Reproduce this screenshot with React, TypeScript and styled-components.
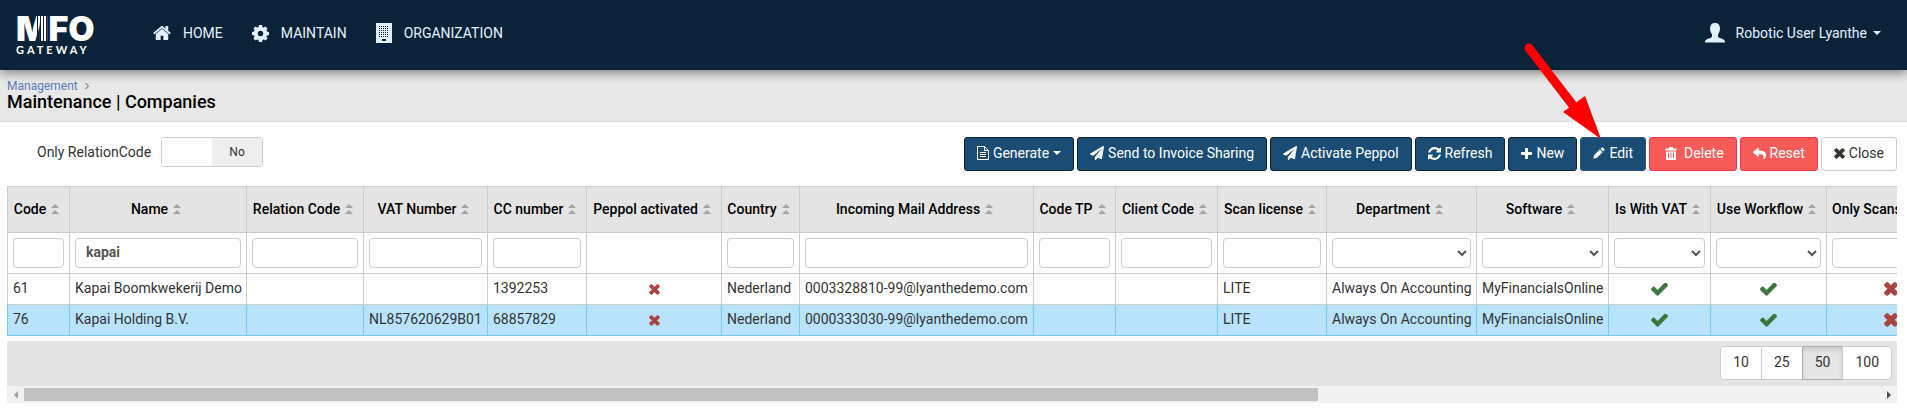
import React from 'react';
import styled, { createGlobalStyle, css } from 'styled-components';
import { FaPaperPlane, FaReply } from 'react-icons/fa';

const GlobalStyle = createGlobalStyle`
  *, *::before, *::after { box-sizing: border-box; }
  body {
    margin: 0;
    background: #fff;
    color: #333;
    font: 14px/20px Roboto, "Liberation Sans", sans-serif;
  }
  button, input, select { font: inherit; color: inherit; }
  a { color: inherit; text-decoration: none; }
`;

/* ---------- icons ---------- */

const Icon = styled.svg<{ $w?: number; $h?: number }>`
  display: block;
  flex: none;
  width: ${(p) => p.$w ?? 14}px;
  height: ${(p) => p.$h ?? p.$w ?? 14}px;
  fill: currentColor;
`;

const CHECK =
  'M1671 566q0 40-28 68l-724 724-136 136q-28 28-68 28t-68-28l-136-136-362-362q-28-28-28-68t28-68l136-136q28-28 68-28t68 28l294 295 656-657q28-28 68-28t68 28l136 136q28 28 28 68z';
const TIMES =
  'M1490 1322q0 40-28 68l-136 136q-28 28-68 28t-68-28l-294-294-294 294q-28 28-68 28t-68-28l-136-136q-28-28-28-68t28-68l294-294-294-294q-28-28-28-68t28-68l136-136q28-28 68-28t68 28l294 294 294-294q28-28 68-28t68 28l136 136q28 28 28 68t-28 68l-294 294 294 294q28 28 28 68z';
const REFRESH =
  'M1639 1056q0 5-1 7-64 268-268 434.5t-478 166.5q-146 0-282.5-55t-243.5-157l-129 129q-19 19-45 19t-45-19-19-45v-448q0-26 19-45t45-19h448q26 0 45 19t19 45-19 45l-137 137q71 66 161 102t187 36q134 0 250-65t186-179q11-17 53-117 8-23 30-23h192q13 0 22.5 9.5t9.5 22.5zm25-800v448q0 26-19 45t-45 19h-448q-26 0-45-19t-19-45 19-45l138-138q-148-137-349-137-134 0-250 65t-186 179q-11 17-53 117-8 23-30 23h-199q-13 0-22.5-9.5t-9.5-22.5v-7q65-268 270-434.5t480-166.5q146 0 284 55.5t245 156.5l130-129q19-19 45-19t45 19 19 45z';
const PLUS =
  'M1600 736v192q0 40-28 68t-68 28h-416v416q0 40-28 68t-68 28h-192q-40 0-68-28t-28-68v-416h-416q-40 0-68-28t-28-68v-192q0-40 28-68t68-28h416v-416q0-40 28-68t68-28h192q40 0 68 28t28 68v416h416q40 0 68 28t28 68z';
const HOME =
  'M1472 992v480q0 26-19 45t-45 19h-384v-384h-256v384h-384q-26 0-45-19t-19-45v-480q0-1 .5-3t.5-3l575-474 575 474q1 2 1 6zm223-69l-62 74q-8 9-21 11h-3q-13 0-21-7l-692-577-692 577q-12 8-24 7-13-2-21-11l-62-74q-8-10-7-23.5t11-21.5l719-599q32-26 76-26t76 26l244 204v-195q0-14 9-23t23-9h192q14 0 23 9t9 23v408l219 182q10 8 11 21.5t-7 23.5z';

const CheckIcon = () => (
  <Icon $w={17} $h={13} viewBox="100 370 1590 1180">
    <path d={CHECK} stroke="currentColor" strokeWidth="50" />
  </Icon>
);
const TimesIcon = ({ small }: { small?: boolean }) => (
  <Icon $w={small ? 11 : 14} viewBox="236 308 1320 1320">
    <path d={TIMES} stroke="currentColor" strokeWidth="110" />
  </Icon>
);
const RefreshIcon = () => <Icon $w={13} viewBox="128 128 1536 1536"><path d={REFRESH} /></Icon>;
const PlusIcon = () => <Icon $w={11} viewBox="192 128 1408 1408"><path d={PLUS} /></Icon>;
const HomeIcon = () => <Icon $w={18} viewBox="64 64 1664 1664"><path d={HOME} /></Icon>;

const CogIcon = () => (
  <Icon $w={17} viewBox="-10 -10 20 20">
    <circle r="5.500" fill="none" stroke="currentColor" strokeWidth="4.500" />
    {[0, 45, 90, 135, 180, 225, 270, 315].map((a) => (
      <path key={a} d="M-2.600-6.500L-1.800-10h3.600l.800 3.500z" transform={`rotate(${a})`} />
    ))}
  </Icon>
);
const FileIcon = () => (
  <Icon $w={12} $h={14} viewBox="0 0 12 14">
    <path fill="none" stroke="currentColor" d="M.5.5h7l4 4v9H.5zM7.5.5v4h4" />
    <path d="M3 6h6v1H3zM3 8h6v1H3zM3 10h6v1H3z" />
  </Icon>
);
const PencilIcon = () => (
  <Icon $w={12} viewBox="0 0 13 13">
    <path d="M9.4.7a1 1 0 0 1 1.4 0l1.5 1.5a1 1 0 0 1 0 1.4L11 4.900 8.100 2zM7.400 2.700l2.900 2.900-6 6L.300 12.700l1.100-4z" />
  </Icon>
);
const TrashIcon = () => (
  <Icon $w={12} $h={13} viewBox="0 0 12 13">
    <path fillRule="evenodd" d="M4 0h4v1.500h3.500V3.500H.500V1.500H4zM1 4.500h10V12a1 1 0 0 1-1 1H2a1 1 0 0 1-1-1zM3 5.500V11h1V5.500zM5.500 5.500V11h1V5.500zM8 5.500V11h1V5.500z" />
  </Icon>
);
const UserIcon = () => (
  <Icon $w={20} viewBox="0 0 20 20">
    <path d="M10 0c3.300 0 5 2 5 5.500 0 2.500-.800 4.500-2 5.800v2.200c0 .500.300.800.800 1l4.200 1.700c1.300.600 2 1.500 2 2.800v.500H0V19c0-1.300.700-2.200 2-2.800l4.200-1.700c.500-.200.800-.500.800-1v-2.200C5.800 10 5 8 5 5.500 5 2 6.700 0 10 0z" />
  </Icon>
);
const BuildingIcon = () => (
  <Icon $w={16} $h={20} viewBox="0 0 16 20">
    <path fillRule="evenodd" d="M0 0h16v20H0zM6 16v2h4v-2z" />
    <path stroke="#0b2338" strokeDasharray="1 1" d="M3 3.500h10M3 5.500h10M3 7.500h10M3 9.500h10M3 11.500h10M3 13.500h10" />
  </Icon>
);
const SortIcon = () => (
  <Icon $w={8} $h={10} viewBox="0 0 8 10">
    <path fill="#a3a3a3" d="M4 0l4 4H0zM4 6l4 4H0z" />
  </Icon>
);
const Caret = styled.span`
  border: 4px solid transparent;
  border-top-color: currentColor;
  border-bottom: 0;
`;

/* ---------- top bar ---------- */

const TopBar = styled.header`
  position: relative;
  display: flex;
  align-items: center;
  height: 70px;
  padding: 0 26px 4px 16px;
  background: #0b2338;
  color: #e4f1fc;
  box-shadow: 0 3px 10px rgba(0, 0, 0, 0.45);
`;
const Logo = styled.a`
  display: flex;
  flex-direction: column;
  width: 137px;
  padding-top: 4px;
  color: #fff;
`;
const LogoMark = styled.span`
  position: relative;
  font: 900 34px/28px Inter, sans-serif;
`;
/* Thin bars that take the place of the right stem of the M. */
const LogoBars = styled.span`
  position: absolute;
  left: 21px;
  top: 0;
  width: 10px;
  height: 28px;
  background: repeating-linear-gradient(90deg, #0b2338 0 1px, transparent 1px 3px);
`;
const LogoSub = styled.span`
  font: 700 11px/13px Lato, sans-serif;
  letter-spacing: 3px;
`;
const Nav = styled.nav`
  display: flex;
  gap: 29px;
  flex: 1;
`;
const NavLink = styled.a`
  display: flex;
  align-items: center;
  gap: 12px;
`;
const UserMenu = styled.button`
  display: flex;
  align-items: center;
  gap: 6px;
  padding: 0;
  border: 0;
  background: none;
  svg { margin-right: 5px; }
`;

/* ---------- page heading ---------- */

const PageHead = styled.section`
  height: 52px;
  padding: 8px 7px 0;
  background: #e8e8e8;
  border-bottom: 1px solid #ddd;
`;
const Crumbs = styled.nav`
  display: flex;
  align-items: center;
  gap: 7px;
  font-size: 12px;
  line-height: 16px;
  color: #5b7bb8;
  svg { fill: none; stroke: #555; }
`;
const Title = styled.h1`
  margin: 0;
  font-size: 18px;
  line-height: 16px;
  font-weight: 500;
  color: #000;
`;

/* ---------- toolbar ---------- */

const Toolbar = styled.div`
  display: flex;
  justify-content: space-between;
  align-items: flex-start;
  padding: 15px 10px 15px 37px;
`;
const Filter = styled.div`
  display: flex;
  align-items: center;
  gap: 10px;
  line-height: 28px;
`;
const Switch = styled.label`
  display: grid;
  grid-template-columns: 1fr 1fr;
  width: 102px;
  height: 30px;
  border: 1px solid #ccc;
  border-radius: 4px;
  overflow: hidden;
  text-align: center;
  font-size: 12px;
  input { appearance: none; margin: 0; background: #fff; }
  span { background: #eee; }
`;
const Actions = styled.div`
  display: flex;
  gap: 3px;
`;
type Tone = 'primary' | 'active' | 'danger' | 'plain';
const tones = {
  primary: css`background: #1b4d74; border-color: #0b2338; color: #fff;`,
  active: css`background: #1b4d74; border-color: #2b5580; color: #fff;`,
  danger: css`background: #f75b57; border-color: #f5344a; color: #fff;`,
  plain: css`background: #fff; border-color: #ccc; color: #333;`,
};
const Button = styled.button<{ $tone: Tone; $wide?: boolean }>`
  display: flex;
  align-items: center;
  gap: ${(p) => (p.$wide ? 7 : 4)}px;
  height: 34px;
  padding: ${(p) => (p.$wide ? '0 12px 2px 15px' : '0 12px 2px')};
  border: 1px solid;
  border-radius: 3px;
  white-space: nowrap;
  ${(p) => tones[p.$tone]}
`;

/* ---------- grid ---------- */

const GridArea = styled.main`
  margin: 0 10px 0 7px;
`;
const Clip = styled.div`
  overflow: hidden;
`;
const Table = styled.table`
  width: 1948px;
  table-layout: fixed;
  border-collapse: separate;
  border-spacing: 0;
`;
const Col = styled.col<{ $w: number }>`
  width: ${(p) => p.$w}px;
`;
const Th = styled.th`
  height: 47px;
  padding: 0 9px 2px 5px;
  border: solid #ccc;
  border-width: 1px 1px 1px 0;
  background: #e4e4e4;
  color: #000;
  font-weight: 500;
  &:first-child { border-left-width: 1px; }
`;
const Sort = styled.button<{ $start?: boolean }>`
  display: flex;
  align-items: center;
  justify-content: ${(p) => (p.$start ? 'flex-start' : 'center')};
  gap: 5px;
  width: 100%;
  padding: 0;
  border: 0;
  background: none;
  color: #000;
  white-space: nowrap;
`;
const Td = styled.td<{ $selected?: boolean }>`
  height: 31px;
  padding: 0 5px 2px;
  border: solid ${(p) => (p.$selected ? '#77c8f4' : '#ccc')};
  border-width: 0 1px 1px 0;
  background: ${(p) => (p.$selected ? '#b9e3fb' : '#fff')};
  white-space: nowrap;
  &:first-child { border-left-width: 1px; }
`;
const FilterTd = styled(Td)`
  height: 41px;
  padding: 0 5px;
`;
const field = css`
  display: block;
  width: 100%;
  height: 30px;
  border: 1px solid #ccc;
  border-radius: 4px;
  background: #fff;
  color: #555;
`;
const Field = styled.input`
  ${field}
  padding: 0 10px 2px;
  font-weight: 700;
`;
const Select = styled.select`
  ${field}
`;
const Mark = styled.span<{ $ok?: boolean }>`
  display: flex;
  justify-content: center;
  padding-top: 2px;
  color: ${(p) => (p.$ok ? '#3c763d' : '#a94442')};
`;
const Footer = styled.div`
  display: flex;
  justify-content: flex-end;
  margin-top: 5px;
  padding: 5px 5px 6px;
  background: #e4e4e4;
`;
const PageSize = styled.button<{ $on?: boolean }>`
  height: 34px;
  margin-left: -1px;
  padding: 0 12px 2px;
  border: 1px solid ${(p) => (p.$on ? '#adadad' : '#ccc')};
  background: ${(p) => (p.$on ? '#e6e6e6' : '#fff')};
  box-shadow: ${(p) => (p.$on ? 'inset 0 3px 5px rgba(0, 0, 0, 0.125)' : 'none')};
  &:first-child { border-radius: 4px 0 0 4px; }
  &:last-child { border-radius: 0 4px 4px 0; }
`;
const ScrollBar = styled.div`
  display: flex;
  align-items: center;
  height: 17px;
  background: #f1f1f1;
`;
const ScrollStep = styled.span<{ $right?: boolean }>`
  display: flex;
  flex: none;
  justify-content: center;
  width: 17px;
  color: ${(p) => (p.$right ? '#505050' : '#a3a3a3')};
`;
const Track = styled.div`
  display: grid;
  grid-template-columns: 23fr 10fr;
  flex: 1;
`;
const Thumb = styled.div`
  height: 13px;
  background: #c1c1c1;
`;
const StepArrow = ({ right }: { right?: boolean }) => (
  <ScrollStep $right={right}>
    <Icon $w={4} $h={8} viewBox="0 0 4 8">
      <path d={right ? 'M0 0l4 4-4 4z' : 'M4 0L0 4l4 4z'} />
    </Icon>
  </ScrollStep>
);

const Pointer = styled.svg`
  position: absolute;
  top: 40px;
  right: 302px;
  width: 84px;
  height: 100px;
  pointer-events: none;
`;

/* ---------- data ---------- */

type Column = { label: string; w: number; filter?: 'text' | 'select'; value?: string; start?: boolean };
const columns: Column[] = [
  { label: 'Code', w: 63, filter: 'text' },
  { label: 'Name', w: 177, filter: 'text', value: 'kapai' },
  { label: 'Relation Code', w: 117, filter: 'text' },
  { label: 'VAT Number', w: 124, filter: 'text' },
  { label: 'CC number', w: 99, filter: 'text' },
  { label: 'Peppol activated', w: 135 },
  { label: 'Country', w: 78, filter: 'text' },
  { label: 'Incoming Mail Address', w: 234, filter: 'text' },
  { label: 'Code TP', w: 82, filter: 'text' },
  { label: 'Client Code', w: 102, filter: 'text' },
  { label: 'Scan license', w: 109, filter: 'text' },
  { label: 'Department', w: 150, filter: 'select' },
  { label: 'Software', w: 132, filter: 'select' },
  { label: 'Is With VAT', w: 102, filter: 'select' },
  { label: 'Use Workflow', w: 116, filter: 'select' },
  { label: 'Only Scans', w: 128, filter: 'select', start: true },
];

const cross = <Mark><TimesIcon small /></Mark>;
const bigCross = <Mark><TimesIcon /></Mark>;
const check = <Mark $ok><CheckIcon /></Mark>;

const rows = [
  ['61', 'Kapai Boomkwekerij Demo', '', '', '1392253', cross, 'Nederland', '0003328810-99@lyanthedemo.com', '', '', 'LITE', 'Always On Accounting', 'MyFinancialsOnline', check, check, bigCross],
  ['76', 'Kapai Holding B.V.', '', 'NL857620629B01', '68857829', cross, 'Nederland', '0000333030-99@lyanthedemo.com', '', '', 'LITE', 'Always On Accounting', 'MyFinancialsOnline', check, check, bigCross],
];
const SELECTED = 1;

export default function App() {
  return (
    <>
      <GlobalStyle />
      <TopBar>
        <Logo href="#">
          <LogoMark>MFO<LogoBars /></LogoMark>
          <LogoSub>GATEWAY</LogoSub>
        </Logo>
        <Nav>
          <NavLink href="#"><HomeIcon />HOME</NavLink>
          <NavLink href="#"><CogIcon />MAINTAIN</NavLink>
          <NavLink href="#"><BuildingIcon />ORGANIZATION</NavLink>
        </Nav>
        <UserMenu><UserIcon />Robotic User Lyanthe<Caret /></UserMenu>
      </TopBar>

      <PageHead>
        <Crumbs>
          <a href="#">Management</a>
          <Icon $w={4} $h={8} viewBox="0 0 4 8"><path d="M.5 1l3 3-3 3" /></Icon>
        </Crumbs>
        <Title>Maintenance | Companies</Title>
      </PageHead>

      <Toolbar>
        <Filter>
          <label htmlFor="relation">Only RelationCode</label>
          <Switch>
            <input id="relation" type="checkbox" role="switch" />
            <span>No</span>
          </Switch>
        </Filter>
        <Actions>
          <Button $tone="primary"><FileIcon />Generate<Caret /></Button>
          <Button $tone="primary"><FaPaperPlane size={14} />Send to Invoice Sharing</Button>
          <Button $tone="primary"><FaPaperPlane size={14} />Activate Peppol</Button>
          <Button $tone="primary"><RefreshIcon />Refresh</Button>
          <Button $tone="primary"><PlusIcon />New</Button>
          <Button $tone="active"><PencilIcon />Edit</Button>
          <Button $tone="danger" $wide><TrashIcon />Delete</Button>
          <Button $tone="danger"><FaReply size={13} />Reset</Button>
          <Button $tone="plain"><TimesIcon small />Close</Button>
        </Actions>
      </Toolbar>

      <GridArea>
        <Clip>
          <Table>
            <colgroup>{columns.map((c) => <Col key={c.label} $w={c.w} />)}</colgroup>
            <thead>
              <tr>
                {columns.map((c) => (
                  <Th key={c.label}><Sort $start={c.start}>{c.label}<SortIcon /></Sort></Th>
                ))}
              </tr>
            </thead>
            <tbody>
              <tr>
                {columns.map((c) => (
                  <FilterTd key={c.label}>
                    {c.filter === 'text' && <Field aria-label={c.label} defaultValue={c.value} />}
                    {c.filter === 'select' && <Select aria-label={c.label}><option /></Select>}
                  </FilterTd>
                ))}
              </tr>
              {rows.map((cells, r) => (
                <tr key={r}>
                  {cells.map((cell, i) => <Td key={i} $selected={r === SELECTED}>{cell}</Td>)}
                </tr>
              ))}
            </tbody>
          </Table>
        </Clip>
        <Footer>
          <PageSize>10</PageSize>
          <PageSize>25</PageSize>
          <PageSize $on>50</PageSize>
          <PageSize>100</PageSize>
        </Footer>
        <ScrollBar>
          <StepArrow />
          <Track><Thumb /></Track>
          <StepArrow right />
        </ScrollBar>
      </GridArea>

      <Pointer viewBox="0 0 84 100" aria-hidden="true">
        <path stroke="#f00" strokeWidth="9" strokeLinecap="round" d="M8 8l46 60" />
        <path fill="#f00" d="M80 99L42 72l22-16z" />
      </Pointer>
    </>
  );
}
